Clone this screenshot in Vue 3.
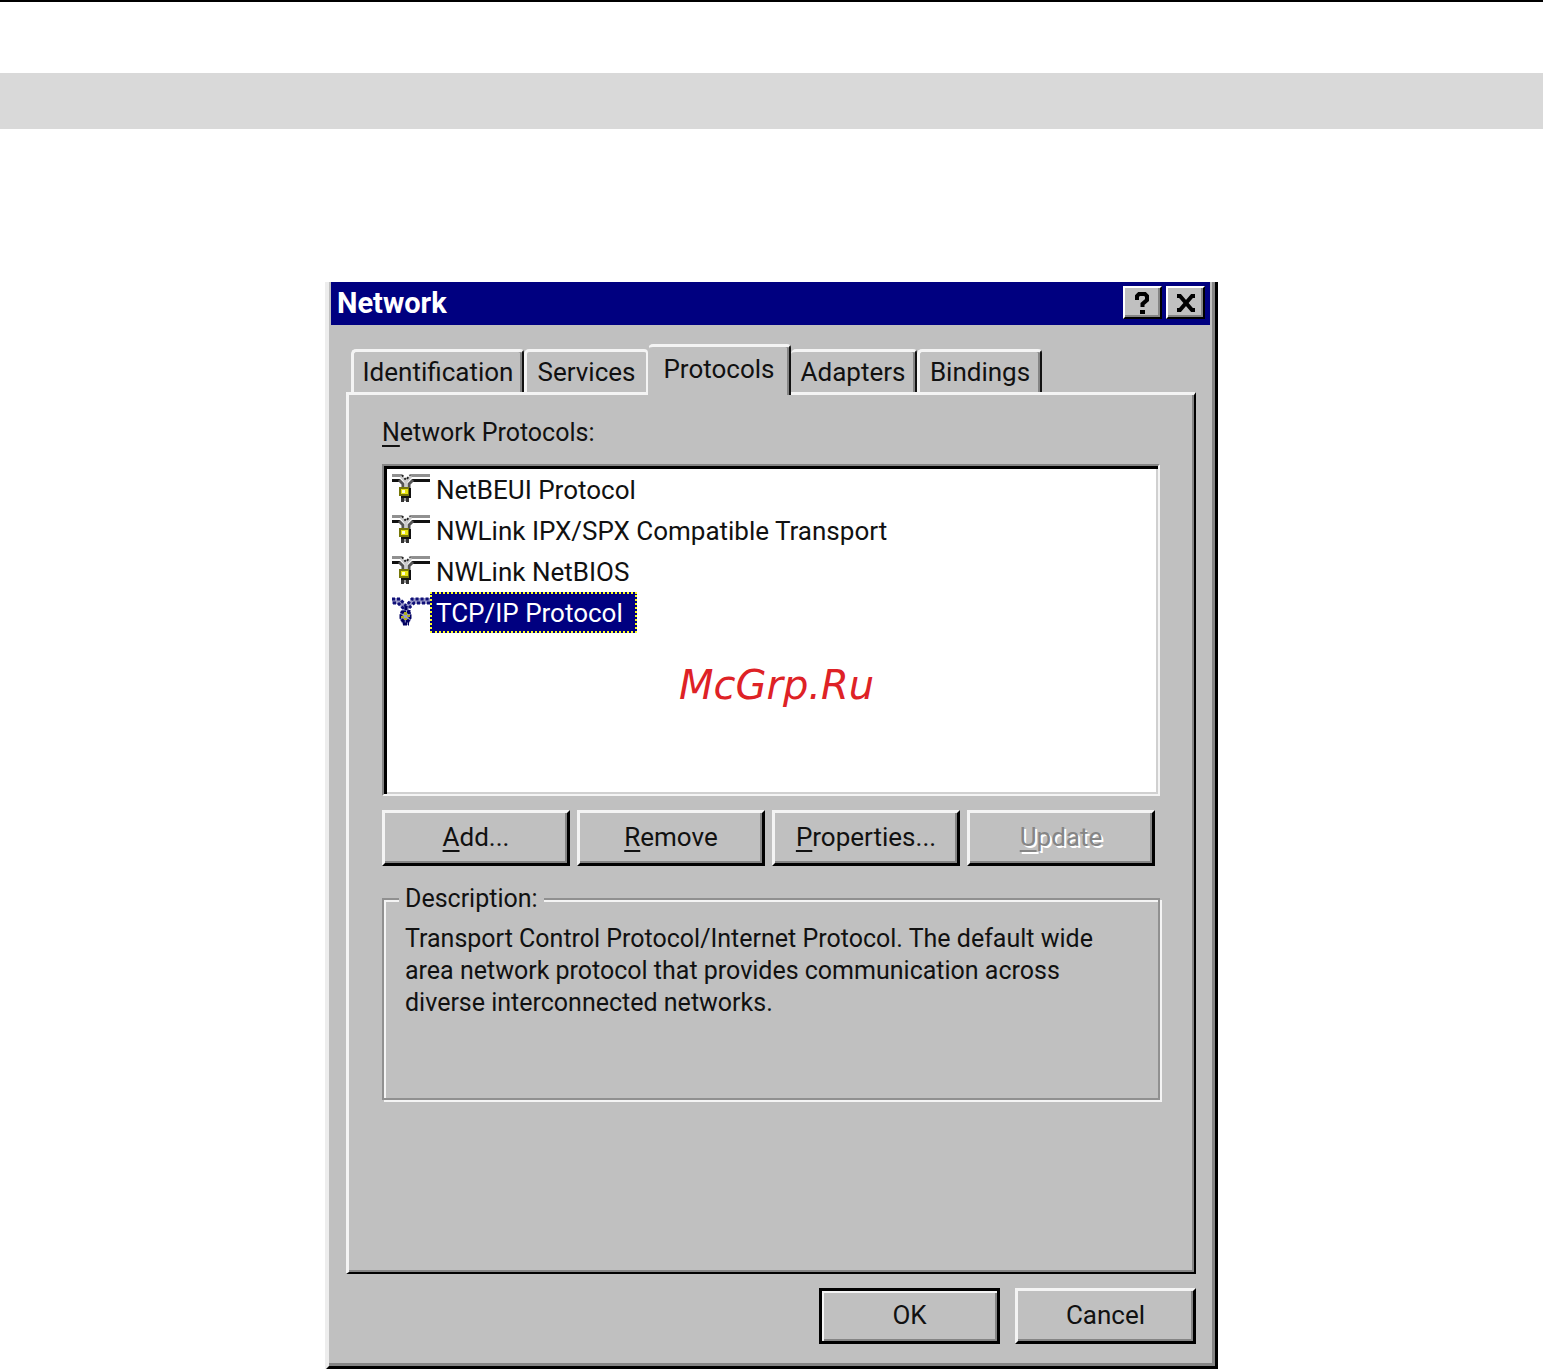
<script setup>
import { ref } from 'vue'

const tabs = ['Identification', 'Services', 'Protocols', 'Adapters', 'Bindings']
const activeTab = ref('Protocols')

const protocols = [
  'NetBEUI Protocol',
  'NWLink IPX/SPX Compatible Transport',
  'NWLink NetBIOS',
  'TCP/IP Protocol',
]
const selected = ref('TCP/IP Protocol')
</script>

<template>
  <main class="page">
    <div class="band"></div>

    <section class="dialog" role="dialog" aria-labelledby="dialog-title">
      <header class="titlebar">
        <h1 id="dialog-title">Network</h1>
        <button class="caption" type="button" aria-label="Help">
          <svg width="15" height="22" viewBox="0 0 15 22">
            <path d="M2 8V4L4 2H10L12 4V8L7.500 12V15" fill="none" stroke="#000" stroke-width="4" />
            <rect x="5" y="18" width="5" height="4" />
          </svg>
        </button>
        <button class="caption" type="button" aria-label="Close">
          <svg width="20" height="18" viewBox="0 0 20 18">
            <path d="M1 2H4L16 16H19M19 2H16L4 16H1" fill="none" stroke="#000" stroke-width="4" />
          </svg>
        </button>
      </header>

      <div class="body">
        <div class="tabs" role="tablist">
          <button
            v-for="tab in tabs"
            :key="tab"
            type="button"
            role="tab"
            class="tab"
            :class="{ active: tab === activeTab }"
            :aria-selected="tab === activeTab"
            @click="activeTab = tab"
          >{{ tab }}</button>
        </div>

        <div class="panel" role="tabpanel">
          <div id="list-label" class="label"><u>N</u>etwork Protocols:</div>

          <div class="listbox">
            <ul role="listbox" aria-labelledby="list-label">
              <li
                v-for="name in protocols"
                :key="name"
                role="option"
                :aria-selected="name === selected"
                :class="{ selected: name === selected }"
                @click="selected = name"
              >
                <svg v-if="name !== selected" width="38" height="30" viewBox="0 0 38 30">
                  <path d="M0 0H10V3H0ZM18 0H38V3H18Z" fill="#909090" />
                  <path d="M0 5H8V8H0ZM20 5H38V8H20Z" fill="#111" />
                  <path d="M7 6L11 10V14M21 6L17 10V14" fill="none" stroke="#555" stroke-width="3" />
                  <path d="M9 2L14 8L19 2M14 7V14" fill="none" stroke="#ccc" stroke-width="3" />
                  <path d="M10 1L14 6L18 1" fill="none" stroke="#222" stroke-width="2" stroke-dasharray="2 2" />
                  <path d="M9 14H19V24H9Z" fill="#111" />
                  <path d="M7 13H17V22H7Z" fill="#77770a" />
                  <path d="M9 15H16V20H9Z" fill="#e8e410" />
                  <path d="M10 16H13V19H10Z" fill="#fffed0" />
                  <path d="M9 24H12V28H9ZM14 24H17V28H14Z" fill="#333" />
                  <path d="M12 24H14V27H12Z" fill="#999" />
                </svg>
                <svg v-else width="38" height="30" viewBox="0 0 38 30">
                  <path d="M0 1H8L14 8L20 1H38V7H21L17 11V14L19 16V23L16 28H11L8 23V16L10 14V11L6 7H0Z" fill="#9a9ac8" />
                  <path d="M0 2H8L14 9L20 2H38M1 6H6L11 11V14M38 6H22L17 11V14" fill="none" stroke="#101078" stroke-width="3" stroke-dasharray="3 2" />
                  <path d="M14 9V14M10 15H17L18 18V21L16 24H11L9 21V18ZM11 27H17" fill="none" stroke="#000060" stroke-width="3" stroke-dasharray="4 1" />
                  <path d="M12 15H15V18H12ZM15 18H18V20H15ZM9 19H12V21H9ZM12 21H15V23H12Z" fill="#b0b020" />
                </svg>
                <span>{{ name }}</span>
              </li>
            </ul>
            <div class="watermark">McGrp.Ru</div>
          </div>

          <div class="actions">
            <button class="btn" type="button"><span><u>A</u>dd...</span></button>
            <button class="btn" type="button"><span><u>R</u>emove</span></button>
            <button class="btn" type="button"><span><u>P</u>roperties...</span></button>
            <button class="btn" type="button" disabled><span><u>U</u>pdate</span></button>
          </div>

          <fieldset class="description">
            <legend>Description:</legend>
            <p>
              Transport Control Protocol/Internet Protocol. The default wide
              area network protocol that provides communication across
              diverse interconnected networks.
            </p>
          </fieldset>
        </div>

        <footer class="footer">
          <button class="btn default" type="button">OK</button>
          <button class="btn" type="button">Cancel</button>
        </footer>
      </div>
    </section>
  </main>
</template>

<style>
body {
  margin: 0;
  background: #fff;
}
</style>

<style scoped>
.page {
  border-top: 2px solid #000;
  padding-top: 71px;
  font-family: Roboto, "Liberation Sans", sans-serif;
  font-size: 26px;
  line-height: 32px;
  color: #111;
}

button {
  font: inherit;
  color: inherit;
  padding: 0;
  border-radius: 0;
}

u {
  text-decoration-thickness: 2px;
  text-underline-offset: 4px;
  text-decoration-skip-ink: none;
}

.band {
  height: 56px;
  background: #d9d9d9;
}

.dialog {
  box-sizing: border-box;
  width: 893px;
  max-width: 100%;
  margin: 153px auto 0;
  padding: 0 5px 3px 2px;
  background: #c0c0c0;
  border-style: solid;
  border-width: 0 3px 4px 4px;
  border-color: #000 #000 #000 #ededed;
  box-shadow: inset -3px -3px 0 #858585;
}

.titlebar {
  display: flex;
  align-items: flex-start;
  gap: 4px;
  height: 43px;
  box-sizing: border-box;
  padding: 4px 5px 0 6px;
  background: #000080;
  color: #fff;
}

.titlebar h1 {
  flex: 1;
  margin: 0;
  font-size: 29px;
  line-height: 34px;
  font-weight: 700;
}

.caption {
  display: flex;
  align-items: center;
  justify-content: center;
  width: 39px;
  height: 33px;
  background: #c0c0c0;
  border: 2px solid;
  border-color: #fff #000 #000 #fff;
  box-shadow: inset -2px -2px 0 #858585;
}

.body {
  padding: 19px 14px 19px 15px;
}

.tabs {
  display: grid;
  grid-template-columns: 173px 124px 143px 126px 125px;
  align-items: end;
  padding-left: 5px;
  height: 48px;
}

.tab {
  height: 43px;
  background: #c0c0c0;
  border-style: solid;
  border-width: 3px 2px 0 3px;
  border-color: #f4f4f4 #111 #111 #f4f4f4;
  border-radius: 5px 4px 0 0;
  box-shadow: inset -2px 0 0 #858585;
}

.tab:nth-child(2) {
  border-right-color: #f4f4f4;
  box-shadow: none;
}

.tab:nth-child(4) {
  border-left: 0;
}

.tab.active {
  position: relative;
  height: 51px;
  margin-bottom: -3px;
  padding-bottom: 4px;
  border-left-width: 1px;
  border-left-color: #c0c0c0;
}

.panel {
  padding: 22px 34px 172px 33px;
  border-style: solid;
  border-width: 3px 2px 2px 3px;
  border-color: #f4f4f4 #000 #000 #f4f4f4;
  box-shadow: inset -2px -2px 0 #858585;
}

.label {
  margin-bottom: 15px;
  font-size: 25px;
}

.listbox {
  position: relative;
  box-sizing: border-box;
  height: 332px;
  background: #fff;
  border-style: solid;
  border-width: 2px;
  border-color: #858585 #f4f4f4 #f4f4f4 #858585;
  box-shadow: inset 3px 3px 0 #000, inset -2px -2px 0 #d0d0d0;
}

.listbox ul {
  list-style: none;
  margin: 0;
  padding: 3px 8px;
}

.listbox li {
  display: flex;
  align-items: center;
  height: 41px;
}

.listbox li svg {
  flex: none;
  margin-bottom: 2px;
}

.listbox li span {
  box-sizing: border-box;
  height: 41px;
  padding: 3px 12px 3px 4px;
  border: 2px solid transparent;
}

.listbox li.selected span {
  color: #fff;
  background: #000080;
  border: 2px dotted #ffff20;
}

.watermark {
  position: absolute;
  top: 195px;
  left: 295px;
  font: italic 40px/48px "DejaVu Sans", sans-serif;
  color: #de2226;
}

.actions {
  display: flex;
  gap: 7px;
  margin: 14px 5px 0 0;
}

.btn {
  flex: 1;
  height: 56px;
  padding-bottom: 2px;
  background: #c0c0c0;
  border-style: solid;
  border-width: 3px;
  border-color: #f4f4f4 #000 #000 #f4f4f4;
  box-shadow: inset -2px -2px 0 #858585;
}

.btn:disabled {
  color: #858585;
  text-shadow: 2px 2px 0 #fff;
}

.description {
  box-sizing: border-box;
  min-width: 0;
  height: 217px;
  margin: 17px 0 0;
  padding: 8px 20px 0 21px;
  border: 2px solid #909090;
  box-shadow: inset 2px 2px 0 #f4f4f4, 2px 2px 0 #f4f4f4;
  font-size: 25px;
}

.description legend {
  margin-left: -6px;
  padding: 0 6px;
  background: #c0c0c0;
}

.description p {
  margin: 0;
}

.footer {
  display: flex;
  justify-content: flex-end;
  gap: 15px;
  margin-top: 14px;
}

.footer .btn {
  flex: 0 0 181px;
}

.footer .default {
  border-color: #000;
  box-shadow: inset 2px 2px 0 #f4f4f4, inset -2px -2px 0 #858585;
}
</style>
